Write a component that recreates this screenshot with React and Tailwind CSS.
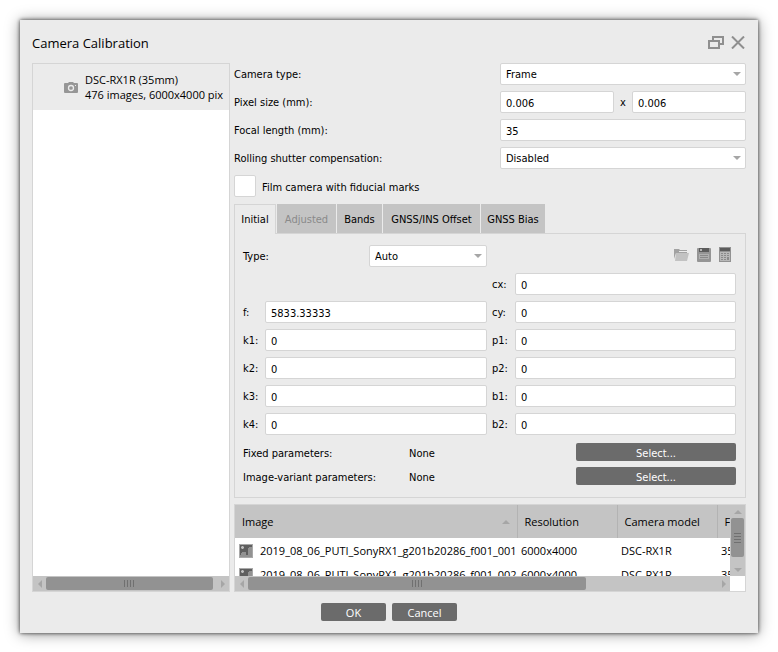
import React from "react";

const leftParams = [
  ["f", "5833.33333"],
  ["k1", "0"],
  ["k2", "0"],
  ["k3", "0"],
  ["k4", "0"],
];
const rightParams = [
  ["cx", "0"],
  ["cy", "0"],
  ["p1", "0"],
  ["p2", "0"],
  ["b1", "0"],
  ["b2", "0"],
];
const images = [
  "2019_08_06_PUTI_SonyRX1_g201b20286_f001_001",
  "2019_08_06_PUTI_SonyRX1_g201b20286_f001_002",
];

const field =
  "h-[22px] w-full min-w-0 rounded-[2px] border border-[#d5d5d5] bg-white px-[5px] pt-[2px] text-[11px] leading-[18px] text-black outline-none";

function Field({ id, value, label }) {
  return <input id={id} type="text" defaultValue={value} aria-label={label} className={field} />;
}

function Dropdown({ id, value, options }) {
  return (
    <div className="relative w-full">
      <select id={id} defaultValue={value} className={`${field} block appearance-none pr-5`}>
        {options.map((o) => (
          <option key={o}>{o}</option>
        ))}
      </select>
      <svg className="pointer-events-none absolute top-[9px] right-[5px] h-1 w-2" viewBox="0 0 8 4" aria-hidden="true">
        <path d="M0 0h8L4 4z" fill="#a6a6a6" />
      </svg>
    </div>
  );
}

function FormRow({ label, htmlFor, children }) {
  return (
    <div className="flex items-center">
      <label htmlFor={htmlFor} className="flex-1 pt-[2px]">
        {label}
      </label>
      <div className="flex w-[246px] items-center">{children}</div>
    </div>
  );
}

function ParamRow({ name, value, wide }) {
  const id = `param-${name}`;
  return (
    <div className="flex items-center">
      <label htmlFor={id} className={wide ? "w-[23px] shrink-0 pt-[2px]" : "w-[22px] shrink-0 pt-[2px]"}>
        {name}:
      </label>
      <Field id={id} value={value} />
    </div>
  );
}

function Arrow({ dir }) {
  const paths = {
    left: "M6 0v8L2 4z",
    right: "M2 0v8L6 4z",
    up: "M0 6h8L4 2z",
    down: "M0 2h8L4 6z",
  };
  return (
    <svg className="h-2 w-2" viewBox="0 0 8 8" aria-hidden="true">
      <path d={paths[dir]} fill="#a6a6a6" />
    </svg>
  );
}

function HScroll({ thumb }) {
  return (
    <div className="flex h-[15px] items-center bg-[#c4c4c4]">
      <button type="button" aria-label="Scroll left" className="flex w-[13px] shrink-0 justify-center">
        <Arrow dir="left" />
      </button>
      <div className="flex-1">
        <div className={`flex h-[13px] items-center justify-center gap-[2px] rounded-[2px] bg-[#929292] ${thumb}`}>
          {[0, 1, 2, 3].map((i) => (
            <span key={i} className="h-[7px] w-px bg-[#707070]" />
          ))}
        </div>
      </div>
      <button type="button" aria-label="Scroll right" className="flex w-[13px] shrink-0 justify-center">
        <Arrow dir="right" />
      </button>
    </div>
  );
}

function VScroll() {
  return (
    <div className="flex w-[15px] shrink-0 flex-col items-center bg-[#c4c4c4]">
      <button type="button" aria-label="Scroll up" className="flex h-[13px] shrink-0 items-center">
        <Arrow dir="up" />
      </button>
      <div className="flex w-[13px] flex-1 flex-col">
        <div className="flex h-[39px] flex-col items-center justify-center gap-[2px] rounded-[2px] bg-[#929292]">
          {[0, 1, 2, 3].map((i) => (
            <span key={i} className="h-px w-[7px] bg-[#707070]" />
          ))}
        </div>
      </div>
      <button type="button" aria-label="Scroll down" className="flex h-[13px] shrink-0 items-center">
        <Arrow dir="down" />
      </button>
    </div>
  );
}

function PictureIcon() {
  return (
    <svg className="h-[14px] w-[14px] shrink-0" viewBox="0 0 14 14" shapeRendering="crispEdges" aria-hidden="true">
      <path d="M0 0h14v14H0z" fill="#a9a9a9" />
      <path d="M1 1h12v12H1z" fill="#5f5f5f" />
      <path d="M9 4h1V3h3v10H1v-2h1V9h1V8h4v3h2z" fill="#929292" />
      <path d="M2 2h3v3H2z" fill="#8a8a8a" />
      <path d="M3 2h1v3H3zM2 3h3v1H2z" fill="#c0c0c0" />
    </svg>
  );
}

function Tab({ children, active, disabled, pad }) {
  return (
    <button
      type="button"
      role="tab"
      aria-selected={!!active}
      disabled={disabled}
      className={
        active
          ? "-mb-px h-[30px] w-[42px] border border-b-0 border-[#d5d5d5] bg-[#ebebeb] text-center text-black"
          : `h-[29px] bg-[#c4c4c4] pt-[2px] text-center text-black disabled:text-[#8a8a8a] ${pad}`
      }
    >
      {children}
    </button>
  );
}

const darkButton = "flex h-[18px] items-center justify-center rounded-[2px] bg-[#6b6b6b] text-white";

export default function App() {
  return (
    <div className="bg-white px-5 pt-5 pb-[19px] font-['DejaVu_Sans_Condensed',Tahoma,sans-serif] text-[11px] leading-[14px] text-black">
      <main className="bg-[#ebebeb] px-3 pt-3 pb-3 shadow-[0_1px_14px_rgba(0,0,0,0.4),0_0_4px_rgba(0,0,0,0.75)]">
        <header className="flex h-[31px] items-start justify-between">
          <h1 className="font-['Open_Sans',sans-serif] text-[13px] leading-[22px]">Camera Calibration</h1>
          <div className="flex items-center gap-[7px] pt-1 pr-px">
            <button type="button" aria-label="Restore">
              <svg className="h-[13px] w-4" viewBox="0 0 16 13" fill="none" stroke="#8f8f8f" strokeWidth="2" aria-hidden="true">
                <path d="M1 5h10v7H1z" />
                <path d="M5 5V1h10v7h-4" />
              </svg>
            </button>
            <button type="button" aria-label="Close">
              <svg className="h-[13px] w-[14px]" viewBox="0 0 14 13" stroke="#8f8f8f" strokeWidth="2" aria-hidden="true">
                <path d="M1 0.5l12 12M13 0.5L1 12.5" />
              </svg>
            </button>
          </div>
        </header>

        <div className="flex gap-1">
          <aside className="flex w-[198px] shrink-0 flex-col border border-[#d5d5d5] bg-white">
            <div className="flex h-[46px] items-center gap-[7px] bg-[#ebebeb] pl-[31px]">
              <svg className="h-[11px] w-[14px] shrink-0" viewBox="0 0 14 11" aria-hidden="true">
                <path d="M1 1h3l1-1h4l1 1h3q1 0 1 1v8q0 1-1 1H1q-1 0-1-1V2q0-1 1-1z" fill="#969696" />
                <circle cx="7" cy="6" r="2.5" fill="none" stroke="#ebebeb" strokeWidth="1.3" />
                <path d="M11 3h1v1h-1z" fill="#ebebeb" />
              </svg>
              <div className="font-['Open_Sans',sans-serif] leading-[15px] whitespace-nowrap">
                <div>DSC-RX1R (35mm)</div>
                <div>476 images, 6000x4000 pix</div>
              </div>
            </div>
            <div className="flex-1" />
            <HScroll thumb="w-[98%]" />
          </aside>

          <section className="min-w-0 flex-1">
            <div className="flex flex-col gap-[6px]">
              <FormRow label="Camera type:" htmlFor="camera-type">
                <Dropdown id="camera-type" value="Frame" options={["Frame", "Fisheye", "Spherical"]} />
              </FormRow>
              <FormRow label="Pixel size (mm):" htmlFor="pixel-width">
                <Field id="pixel-width" value="0.006" />
                <span className="w-[18px] shrink-0 pt-[2px] text-center">x</span>
                <Field id="pixel-height" value="0.006" label="Pixel height (mm)" />
              </FormRow>
              <FormRow label="Focal length (mm):" htmlFor="focal-length">
                <Field id="focal-length" value="35" />
              </FormRow>
              <FormRow label="Rolling shutter compensation:" htmlFor="rolling">
                <Dropdown id="rolling" value="Disabled" options={["Disabled", "Regularized", "Full"]} />
              </FormRow>
              <label className="flex h-[22px] items-center gap-[6px]">
                <input
                  type="checkbox"
                  className="h-[22px] w-[22px] appearance-none rounded-[2px] border border-[#d5d5d5] bg-white checked:bg-[#929292]"
                />
                <span className="pt-[3px]">Film camera with fiducial marks</span>
              </label>
            </div>

            <div role="tablist" className="mt-[7px] flex items-start gap-px">
              <Tab active>Initial</Tab>
              <Tab disabled pad="w-[59px]">Adjusted</Tab>
              <Tab pad="w-[45px]">Bands</Tab>
              <Tab pad="w-[97px]">GNSS/INS Offset</Tab>
              <Tab pad="w-[64px]">GNSS Bias</Tab>
            </div>

            <div className="border border-[#d5d5d5] pt-[11px] pr-[9px] pb-3 pl-2">
              <div className="flex items-center">
                <label htmlFor="model-type" className="w-[126px] pt-[2px]">
                  Type:
                </label>
                <div className="w-[118px]">
                  <Dropdown id="model-type" value="Auto" options={["Auto", "Precalibrated"]} />
                </div>
                <div className="ml-auto flex items-center gap-2 pr-[5px] pb-[3px]">
                  <button type="button" aria-label="Open">
                    <svg className="h-[15px] w-[15px]" viewBox="0 0 15 15" aria-hidden="true">
                      <path d="M0 2h5l1 1h7v3H2L0 12z" fill="#a2a2a2" />
                      <path d="M5 4h8v1H5z" fill="#ebebeb" />
                      <path d="M2 6h13l-2 8H1z" fill="#c2c2c2" />
                    </svg>
                  </button>
                  <button type="button" aria-label="Save">
                    <svg className="h-[15px] w-[14px]" viewBox="0 0 14 15" aria-hidden="true">
                      <rect y="1" width="14" height="14" rx="1" fill="#959595" />
                      <path d="M2 1h10v4H2z" fill="#5c5c5c" />
                      <path d="M3 2h2v2H3z" fill="#b5b5b5" />
                      <path d="M2 7h10v5H2z" fill="#b0b0b0" />
                      <path d="M3 8h8v1H3zM3 10h8v1H3z" fill="#8a8a8a" />
                    </svg>
                  </button>
                  <button type="button" aria-label="Calculate">
                    <svg className="h-[15px] w-3" viewBox="0 0 12 15" shapeRendering="crispEdges" aria-hidden="true">
                      <path d="M0 0h12v15H0z" fill="#929292" />
                      <path d="M1 1h10v3H1z" fill="#5c5c5c" />
                      <path d="M1 5h10v9H1z" fill="#b8b8b8" />
                      <path
                        d="M2 6h2v1H2zM5 6h2v1H5zM8 6h2v1H8zM2 8h2v1H2zM5 8h2v1H5zM8 8h2v1H8zM2 10h2v1H2zM5 10h2v1H5zM8 10h2v3H8zM2 12h2v1H2zM5 12h2v1H5z"
                        fill="#8a8a8a"
                      />
                    </svg>
                  </button>
                </div>
              </div>

              <div className="mt-[6px] flex items-end gap-[5px]">
                <div className="flex flex-1 flex-col gap-[6px]">
                  {leftParams.map(([n, v]) => (
                    <ParamRow key={n} name={n} value={v} />
                  ))}
                </div>
                <div className="flex flex-1 flex-col gap-[6px]">
                  {rightParams.map(([n, v]) => (
                    <ParamRow key={n} name={n} value={v} wide />
                  ))}
                </div>
              </div>

              <div className="mt-2 flex flex-col gap-[6px]">
                {["Fixed parameters:", "Image-variant parameters:"].map((t) => (
                  <div key={t} className="flex h-[18px] items-center">
                    <span className="w-[166px] pt-[3px]">{t}</span>
                    <span className="flex-1 pt-[3px]">None</span>
                    <button type="button" aria-label={`Select ${t}`} className={`${darkButton} w-40 pt-[3px]`}>
                      Select...
                    </button>
                  </div>
                ))}
              </div>
            </div>

            <div className="mt-[6px] border border-[#d5d5d5] bg-white font-['Open_Sans',sans-serif]">
              <div className="flex h-[71px]">
                <div className="min-w-0 flex-1 overflow-hidden">
                  <table className="w-[582px] table-fixed border-collapse text-left whitespace-nowrap">
                    <colgroup>
                      <col className="w-[282px]" />
                      <col className="w-[100px]" />
                      <col className="w-[100px]" />
                      <col className="w-[100px]" />
                    </colgroup>
                    <thead>
                      <tr className="h-[33px] bg-[#c4c4c4]">
                        <th className="border-r border-[#b3b3b3] px-[7px] font-normal">
                          <div className="flex items-center justify-between">
                            Image
                            <Arrow dir="up" />
                          </div>
                        </th>
                        <th className="border-r border-[#b3b3b3] px-[7px] font-normal">Resolution</th>
                        <th className="border-r border-[#b3b3b3] px-[7px] font-normal">Camera model</th>
                        <th className="px-[7px] font-normal">F</th>
                      </tr>
                    </thead>
                    <tbody>
                      {images.map((name) => (
                        <tr key={name} className="h-6">
                          <td className="pt-[2px] pl-1">
                            <div className="flex items-center gap-[7px]">
                              <PictureIcon />
                              {name}
                            </div>
                          </td>
                          <td className="pt-[2px] pl-1">6000x4000</td>
                          <td className="pt-[2px] pl-1">DSC-RX1R</td>
                          <td className="pt-[2px] pl-1">35</td>
                        </tr>
                      ))}
                    </tbody>
                  </table>
                </div>
                <VScroll />
              </div>
              <div className="pr-[15px]">
                <HScroll thumb="w-[72%]" />
              </div>
            </div>
          </section>
        </div>

        <footer className="mt-[11px] flex justify-center gap-[6px] font-['Open_Sans',sans-serif]">
          <button type="button" className={`${darkButton} w-[65px] pt-px`}>
            OK
          </button>
          <button type="button" className={`${darkButton} w-[65px] pt-px`}>
            Cancel
          </button>
        </footer>
      </main>
    </div>
  );
}
